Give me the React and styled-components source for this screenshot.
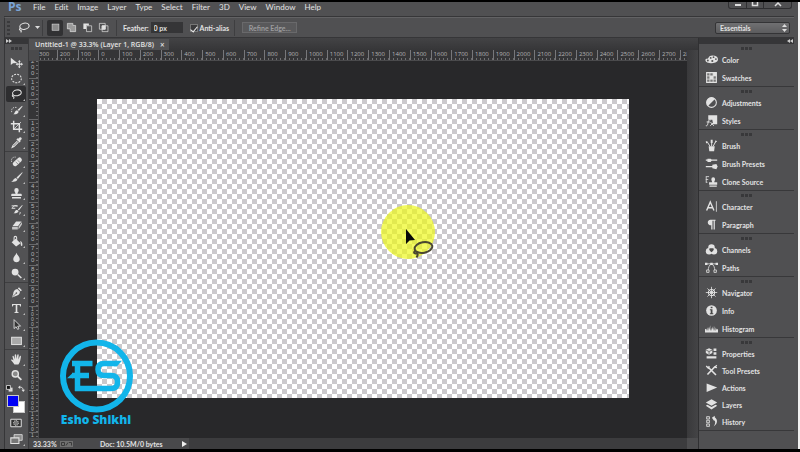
import React, { useState } from 'react';
import styled, { createGlobalStyle } from 'styled-components';

const MENUS = ['File', 'Edit', 'Image', 'Layer', 'Type', 'Select', 'Filter', '3D', 'View', 'Window', 'Help'];

const H_MARKS = Array.from({ length: 32 }, (_, i) => Math.abs(i * 100 - 300));
const V_MARKS = Array.from({ length: 19 }, (_, i) => Math.abs(i * 100 - 200));

const lassoShape = (
    <g fill="none" stroke="currentColor" strokeWidth="1.3">
        <ellipse cx="8.5" cy="6" rx="5.4" ry="3.5" transform="rotate(-12 8.5 6)" />
        <path d="M4 8.2c-1.6.6-1.5 2.2-.1 2.3 1.2 0 1.2 1.5.3 2.6" />
    </g>
);

const TOOL_GROUPS = [
    [
        { name: 'Move', noFlyout: true, art: <g fill="currentColor"><path d="M1 2v9l2.700-2.200L9 8.500z" /><path d="M11.500 5l1.800 2.200h-1.200v2h1.700V8l2.200 2-2.200 2v-1.200h-1.700v2h1.200L11.500 15l-1.800-2.200h1.200v-2H9.200V12L7 10l2.200-2v1.200h1.700v-2H9.700z" /></g> },
        { name: 'Elliptical marquee', art: <ellipse cx="8" cy="8" rx="6" ry="5.2" fill="none" stroke="currentColor" strokeWidth="1.3" strokeDasharray="2.4 1.4" /> },
        { name: 'Lasso', art: lassoShape },
        { name: 'Quick selection', art: <g><path d="M15 2L9.4 7l1.6 1.7L15.4 3z" fill="currentColor" /><path d="M8.8 7.6l1.9 2c-1 2.8-4.2 3.6-6.7 2.9 1.6-.7 1.4-1.6 2-2.7.6-1.2 1.7-1.9 2.8-2.2z" fill="currentColor" /><path d="M2 10V7.500C2.300 5 4.500 3.800 8 4.200" fill="none" stroke="currentColor" strokeDasharray="1.6 1.2" /></g> },
        { name: 'Crop', art: <g fill="none" stroke="currentColor" strokeWidth="1.8"><path d="M4.500 1v10.500H15M1 4.500h10.500V15" /><path d="M5 11l8.500-8.500" strokeWidth="1" /></g> },
        { name: 'Eyedropper', art: <g><path d="M10 3.500l1.800-1.800c1.600-1 3.400.8 2.400 2.400L12.400 6l.7.800-1.300 1.300L7.900 4.200l1.300-1.300z" fill="currentColor" /><path d="M9 6.200L3.600 11.600 2.600 14l2.300-1 5.500-5.400" fill="none" stroke="currentColor" strokeWidth="1.300" /></g> },
    ],
    [
        { name: 'Healing brush', art: <g><rect x="2.500" y="5.600" width="13" height="5.600" rx="2.600" transform="rotate(-42 9 8.400)" fill="currentColor" /><path d="M7 8.500l3 2.700M9.200 6.400l3 2.700" stroke="#6a6a6a" strokeWidth=".8" /><path d="M2 8.500C1 5 3 2.200 7 2.600" fill="none" stroke="currentColor" strokeDasharray="1.500 1.200" /></g> },
        { name: 'Brush', art: <g fill="currentColor"><path d="M15 1.500L8 8l1.700 1.800L15.500 2z" /><path d="M7.300 8.600l1.900 2c-1 2.600-4.600 3.300-7.700 2.400 1.900-.5 2.200-1.300 2.800-2.400.8-1.200 1.800-1.900 3-2z" /></g> },
        { name: 'Clone stamp', art: <path d="M6.800 8.200C6.600 6.800 5.300 5.800 5.300 4a2.700 2.700 0 015.400 0c0 1.800-1.300 2.800-1.500 4.200H13c1 0 1.500.6 1.500 1.600v1.400h-13V9.800c0-1 .5-1.600 1.500-1.600zM2.500 12.300h11v1.700h-11z" fill="currentColor" /> },
        { name: 'History brush', art: <g><path d="M15 2.500L9.700 8l1.200 1.200L15.500 3z" fill="currentColor" /><path d="M9 8.600l1.500 1.500c-.8 2-3.300 3-6.500 2.500 1.600-.5 1.500-1.400 2.100-2.500.6-.9 1.700-1.600 2.900-1.500z" fill="currentColor" /><path d="M2 3.500h7.500M2 6.500h4.500M3 6c1-2.800 4-3.500 6-2M12 11c1 .8 1 2-.5 2.800" fill="none" stroke="currentColor" strokeWidth="1.200" /></g> },
        { name: 'Eraser', art: <g><path d="M7.500 3h6.700l-4.400 6H3z" fill="currentColor" /><path d="M2.600 9.800h7v3.200h-7zM10.500 9.600l4.200-5.800v3l-4.200 6z" fill="currentColor" opacity=".8" /></g> },
        { name: 'Paint bucket', art: <g><path d="M7 4.500l6 5.500-5.500 4L2 8.800z" fill="currentColor" /><path d="M5 8V3.500c0-2.400 3.200-2.400 3.200 0V7" fill="none" stroke="currentColor" strokeWidth="1.300" /><path d="M12.500 7.500c2 .6 3 2.400 2.700 5.500-.9.900-1.900.3-1.900-.7 0-1.800-.2-3-.8-4.800z" fill="currentColor" /></g> },
        { name: 'Blur', art: <path d="M8 2c.6 2.800 4 5 4 8.200 0 5-8 5-8 0C4 7 7.400 4.800 8 2z" fill="currentColor" /> },
        { name: 'Dodge', art: <g><circle cx="6.300" cy="6.300" r="4.200" fill="currentColor" /><path d="M9.500 9.300l4.500 4.200" stroke="currentColor" strokeWidth="1.900" /></g> },
    ],
    [
        { name: 'Pen', art: <g><path d="M11 1.500l3.700 3.700-1.500 1.300L9.700 3z" fill="currentColor" /><path d="M9 3.800l3.300 3.400c-.3 3-2.300 4.800-5.900 5.300L2.500 14l1.300-4C4.200 6.500 6 4.300 9 3.800z" fill="currentColor" /><path d="M3 13.500l4.400-4.300" stroke="#535353" strokeWidth=".9" /><circle cx="7.900" cy="8.700" r="1" fill="#535353" /></g> },
        { name: 'Type', art: <path d="M2.500 2.500h11v3h-1c-.2-1.400-.8-1.700-2-1.700H9V11.500c0 .9.500 1.100 1.600 1.200v.8H5.400v-.8C6.500 12.600 7 12.400 7 11.500V3.800H5.500c-1.200 0-1.800.3-2 1.700h-1z" fill="currentColor" /> },
        { name: 'Path selection', art: <path d="M5 2v11l2.500-2.300L9.400 14l1.600-.8L9.500 10H13z" fill="#333" stroke="currentColor" strokeWidth="1.100" /> },
        { name: 'Rectangle', art: <rect x="2" y="4" width="12" height="9" fill="#a9a9a9" stroke="currentColor" strokeWidth="1.200" /> },
    ],
    [
        { name: 'Hand', art: <path d="M5.500 14C4.200 11.900 2.900 10.300 1.200 8.500c.7-1 1.900-.6 3.100.8L3 4.200c.2-1.100 1.400-1 1.700 0l1.200 3.500L5.800 2.500c.3-1.200 1.600-1.100 1.800 0l.5 4.800.9-5c.4-1 1.600-.9 1.700.2l-.4 5.400 1.700-3.900c.5-.9 1.700-.5 1.500.6-.6 3.200-.9 6.700-3.200 9.400z" fill="currentColor" /> },
        { name: 'Zoom', noFlyout: true, art: <g><circle cx="6.500" cy="6" r="3.800" fill="#8a8a8a" stroke="currentColor" strokeWidth="1.700" /><path d="M9.200 8.800l4.800 4.700" stroke="currentColor" strokeWidth="2.200" /></g> },
    ],
];

const PANEL_GROUPS = [
    [
        { name: 'Color', art: <g><path d="M9 3c4.500 0 7 2 7 4.800 0 3-3 4.700-7.500 4.700C4 12.500.5 11.300.5 8.600c0-1.500 1.300-1.800 2.600-1.600C4.500 7 4 3 9 3z" fill="currentColor" /><g fill="#535353"><circle cx="3.500" cy="9.300" r="1.200" /><circle cx="7" cy="6" r="1.100" /><circle cx="10.500" cy="5.200" r="1.100" /><circle cx="13.400" cy="7.500" r="1.100" /><circle cx="9" cy="9.800" r="1.300" /></g></g> },
        { name: 'Swatches', art: <g><path d="M2 2h12v12H2z" fill="#777" stroke="currentColor" strokeWidth="1.300" /><path d="M6 2v12M10 2v12M2 6h12M2 10h12" stroke="currentColor" /><path d="M10 2h4v4h-4zM6 6h4v4H6z" fill="currentColor" /></g> },
    ],
    [
        { name: 'Adjustments', art: <g><circle cx="8" cy="8" r="6" fill="none" stroke="currentColor" strokeWidth="1.300" /><path d="M12.300 3.700A6 6 0 003.700 12.300z" fill="currentColor" /></g> },
        { name: 'Styles', art: <g><path d="M4 1.500h11v11h-5L9 7H4z" fill="currentColor" /><path d="M7 7.300c-3-1-2.800 2.400-3.500 4.500-.4 2-.9 3-2.500 2.600M2 9.800h4M6.800 10l4 4.500M11 10l-4.500 4.500" fill="none" stroke="currentColor" strokeWidth="1.200" /></g> },
    ],
    [
        { name: 'Brush', art: <g><path d="M4.500 9h7.500l-.8 6H5.300z" fill="currentColor" /><path d="M6.300 9L3 4M8.200 9V2M10 9l3-5.500" stroke="currentColor" strokeWidth="1.200" /><path d="M1.300 5.500L1 2.500l3.300 1.300zM7 1h2.400v4H7zM12 4.500l1-3L15 3z" fill="currentColor" /></g> },
        { name: 'Brush Presets', art: <g><path d="M1 3.200h14v1.500H1zM1 11h14v1.500H1z" fill="currentColor" /><path d="M3 2h4l1.500 2L7 6H3zM9 9.500l5-1 1.500 3.200L14 15l-5-1.300z" fill="currentColor" /></g> },
        { name: 'Clone Source', art: <g><path d="M8.800 9c0-1.700-1-2-1-3.800a2.300 2.300 0 014.600 0c0 1.800-1 2.100-1 3.800H15v3H5V9zM5.500 12.800h9v1.700h-9z" fill="currentColor" /><path d="M1 2h4M1 5.500h3M1 9h2M1.500 2v7" stroke="currentColor" /></g> },
    ],
    [
        { name: 'Character', art: <g fill="none" stroke="currentColor"><path d="M2 13L6.500 2.500 11 13M3.500 9.500h6" strokeWidth="1.700" /><path d="M14 1.500v13" /></g> },
        { name: 'Paragraph', art: <path d="M6.700 2H13v1.300h-.9V14h-1.500V3.300H9.200V14H7.700V9C2.200 9 2.200 2 6.700 2z" fill="currentColor" /> },
    ],
    [
        { name: 'Channels', art: <g><circle cx="8" cy="5.500" r="4" fill="currentColor" /><circle cx="5" cy="10" r="4" fill="currentColor" /><circle cx="11" cy="10" r="4" fill="currentColor" /><path d="M5 7.200c2-.8 4-.8 6 0-.3 1.800-1.400 3.200-3 4.300-1.600-1.100-2.700-2.500-3-4.300z" fill="#4a4a4a" /></g> },
        { name: 'Paths', art: <g><path d="M1 3.500h14M4 12c0-4 1-7 4-8.500 3 1.500 4 4.500 4 8.500" fill="none" stroke="currentColor" /><path d="M0 2h3v3H0zM6.500 2h3v3h-3zM13 2h3v3h-3z" fill="currentColor" /><path d="M2 11h3v3H2zM11 11h3v3h-3z" fill="#535353" stroke="currentColor" /></g> },
    ],
    [
        { name: 'Navigator', art: <g fill="none" stroke="currentColor"><circle cx="8" cy="8" r="3.800" strokeWidth="1.300" /><path d="M8 1v14M1 8h14M3 3l10 10M13 3L3 13" /><circle cx="8" cy="8" r="1.300" fill="currentColor" /></g> },
        { name: 'Info', art: <g><circle cx="8" cy="8" r="6.600" fill="currentColor" /><path d="M7 3.300h2.200v2H7zM6 6.500h3.200v5h1v1.200H6v-1.200h1V7.700H6z" fill="#474747" /></g> },
        { name: 'Histogram', art: <path d="M0 13V9l1.500-.8V11L3 6.500V11l1.500-5V11L6.500 4v7L8 7v4l2-6v6l1.500-6v6L13 6.500V11l1.500-3 1.500 1.500V13z" fill="currentColor" /> },
    ],
    [
        { name: 'Properties', art: <g><path d="M5 1.500L9 3.300v4L5 9.500 1 7.300v-4z" fill="currentColor" /><path d="M1.500 4L5 5.500 8.500 4M5 5.500V9" fill="none" stroke="#555" /><path d="M10.500 1.800H14V5h-3.500zM10.500 6.500H14v3h-3.500zM2 11.500h12v2.600H2z" fill="currentColor" /></g> },
        { name: 'Tool Presets', art: <g fill="none" stroke="currentColor"><path d="M4 4l9.500 9.500M12.500 3L3 13" strokeWidth="2" /><path d="M1.500 2.500L4 5l1.300-2.400M14.500 1.500L12 4l2.700.6" strokeWidth="1.600" /></g> },
        { name: 'Actions', art: <path d="M2 3l13 5-13 5.500z" fill="currentColor" /> },
        { name: 'Layers', art: <g fill="currentColor"><path d="M8 1.500l7 4-7 4-7-4z" /><path d="M1 9.500l2-1.200 5 2.900 5-2.900 2 1.200-7 4.500z" /></g> },
        { name: 'History', art: <g><path d="M2 2h3.500v3H2zM2 6.500h3.500v3H2zM2 11h3.500v3H2z" fill="#666" stroke="currentColor" /><path d="M8.500 3.500L12 1v1.900c4 2.600 3.800 8-1.300 11.300C13 10.500 13 8 11.500 6v1.800z" fill="currentColor" /></g> },
    ],
];

const SELECT_MODES = [
    { name: 'New selection', art: <rect x="3" y="3" width="10" height="9" fill="#8b8b8b" stroke="currentColor" strokeWidth=".8" /> },
    { name: 'Add to selection', art: <path d="M2 2h8v3h4v9H6v-4H2z" fill="#9b9b9b" stroke="currentColor" /> },
    { name: 'Subtract from selection', art: <g><path d="M2 2h8v3H6v5H2z" fill="currentColor" /><path d="M6.500 5.500h7.500V14H6.500z" fill="none" stroke="currentColor" /></g> },
    { name: 'Intersect with selection', art: <g fill="none" stroke="currentColor"><path d="M2 2h8.500v8.500H2zM6 5.500h8.500V14H6z" /><path d="M6 5.500h4.500v5H6z" fill="currentColor" /></g> },
];

const Icon = ({ size = 12, children }) => (
    <svg width={size} height={size} viewBox="0 0 16 16" aria-hidden="true">{children}</svg>
);

const App = () => {
    const [tool, setTool] = useState('Lasso');
    const [mode, setMode] = useState('New selection');
    const [feather, setFeather] = useState('0 px');
    const [antiAlias, setAntiAlias] = useState(true);

    return (
        <Screen>
            <GlobalStyle />
            <Frame>
                <MenuBar>
                    <Brand>Ps</Brand>
                    {MENUS.map((menu) => <MenuButton key={menu}>{menu}</MenuButton>)}
                    <WindowControls>
                        <WindowButton aria-label="Minimize">
                            <svg width="8" height="6"><path d="M1 3h6" stroke="#ddd" strokeWidth="2" /></svg>
                        </WindowButton>
                        <WindowButton aria-label="Restore">
                            <svg width="8" height="6"><path d="M1.500 0v3.500h5V0" fill="none" stroke="#ddd" strokeWidth="1.500" /></svg>
                        </WindowButton>
                        <WindowButton $wide aria-label="Close">
                            <svg width="8" height="6"><path d="M1 4l3-3 3 3" fill="none" stroke="#ddd" strokeWidth="1.500" /></svg>
                        </WindowButton>
                    </WindowControls>
                </MenuBar>

                <OptionsBar>
                    <BarGrip />
                    <PresetButton aria-label="Lasso preset">
                        <Icon size={14}>{lassoShape}</Icon>
                        <svg width="5" height="3"><path d="M0 0h5L2.500 3z" fill="#ddd" /></svg>
                    </PresetButton>
                    <Divider />
                    <Modes>
                        {SELECT_MODES.map(({ name, art }) => (
                            <ModeButton key={name} aria-label={name} $active={mode === name} onClick={() => setMode(name)}>
                                <Icon size={11}>{art}</Icon>
                            </ModeButton>
                        ))}
                    </Modes>
                    <Divider />
                    <Field>
                        Feather:
                        <FeatherInput value={feather} onChange={(e) => setFeather(e.target.value)} />
                    </Field>
                    <CheckField>
                        <CheckBox type="checkbox" checked={antiAlias} onChange={(e) => setAntiAlias(e.target.checked)} />
                        Anti-alias
                    </CheckField>
                    <Divider />
                    <RefineButton>Refine Edge...</RefineButton>
                    <WorkspacePicker>
                        <WorkspaceSelect aria-label="Workspace">
                            <option>Essentials</option>
                        </WorkspaceSelect>
                        <PickerArrows width="5" height="8" viewBox="0 0 5 8">
                            <path d="M0 3L2.500 0 5 3zM0 5h5L2.500 8z" fill="#ddd" />
                        </PickerArrows>
                    </WorkspacePicker>
                </OptionsBar>

                <Workspace>
                    <Toolbar>
                        <ColumnHead>
                            <svg width="6" height="4"><path d="M0 0l3 2-3 2zM3 0l3 2-3 2z" fill="#ccc" /></svg>
                        </ColumnHead>
                        <Grip $tall />
                        {TOOL_GROUPS.map((group, i) => (
                            <ToolGroup key={i}>
                                {group.map(({ name, art, noFlyout }) => (
                                    <ToolButton key={name} aria-label={name} $active={tool === name} $flyout={!noFlyout} onClick={() => setTool(name)}>
                                        <Icon size={13}>{art}</Icon>
                                    </ToolButton>
                                ))}
                            </ToolGroup>
                        ))}
                        <ColorResets>
                            <ResetButton aria-label="Default colors">
                                <Icon size={7}><path d="M6 6h9v9H6z" fill="#ddd" /><path d="M1 1h9v9H1z" fill="#111" stroke="#ddd" strokeWidth="2" /></Icon>
                            </ResetButton>
                            <ResetButton aria-label="Swap colors">
                                <Icon size={7}><path d="M3 5c6-1 9 2 9 8" fill="none" stroke="#ddd" strokeWidth="2" /><path d="M0 5l5-4v8zM8 11h8l-4 5z" fill="#ddd" /></Icon>
                            </ResetButton>
                        </ColorResets>
                        <ColorPair>
                            <ColorChip $back $color="#ffffff" aria-label="Background color" />
                            <ColorChip $color="#0000f5" aria-label="Foreground color" />
                        </ColorPair>
                        <ToolButton aria-label="Quick mask">
                            <Icon size={12}><path d="M1 3h14v10H1z" fill="#333" stroke="currentColor" strokeWidth="1.300" /><circle cx="8" cy="8" r="3.300" fill="#777" stroke="currentColor" strokeDasharray="1.500 1" /></Icon>
                        </ToolButton>
                        <ToolButton aria-label="Screen mode" $flyout>
                            <Icon size={13}><path d="M5 2h10v7H5z" fill="#8a8a8a" stroke="currentColor" /><path d="M1 6h10v7H1z" fill="#777" stroke="currentColor" strokeWidth="1.300" /></Icon>
                        </ToolButton>
                    </Toolbar>

                    <Document>
                        <TabStrip>
                            <Tab>
                                Untitled-1 @ 33.3% (Layer 1, RGB/8)
                                <CloseTab aria-label="Close tab">×</CloseTab>
                            </Tab>
                        </TabStrip>
                        <RulerCorner />
                        <TopRuler>
                            {H_MARKS.map((mark, i) => <TopMark key={i}>{mark}</TopMark>)}
                        </TopRuler>
                        <SideRuler>
                            {V_MARKS.map((mark, i) => (
                                <SideMark key={i} $dense={mark >= 1000}>
                                    {String(mark).split('').map((digit, n) => <span key={n}>{digit}</span>)}
                                </SideMark>
                            ))}
                        </SideRuler>
                        <Pasteboard>
                            <Artboard>
                                <Pointer>
                                    <svg width="54" height="54" viewBox="0 0 54 54" overflow="visible" aria-hidden="true">
                                        <path d="M25 24v15l3.500-3.500L34 35z" fill="#080808" />
                                        <g fill="none" stroke="#4a4730" strokeWidth="2">
                                            <ellipse cx="42.500" cy="42.500" rx="9" ry="5.300" transform="rotate(-10 42.500 42.500)" />
                                            <path d="M34.500 45.500c-3 2.500-.5 3.500 1.500 2.500 1 1 .5 3-.5 4.500" />
                                        </g>
                                    </svg>
                                </Pointer>
                            </Artboard>
                        </Pasteboard>
                        <ScrollTrack />
                        <StatusRow>
                            <Status>
                                <ZoomLevel>33.33%</ZoomLevel>
                                <svg width="13" height="6"><path d="M0 0h13v6H0z" fill="#707070" /><path d="M1.500 1.500h3v3h-3zM6 4.500l2-3M9 1.500h2.500v3" fill="none" stroke="#3b3b3b" /></svg>
                                <DocSize>Doc: 10.5M/0 bytes</DocSize>
                                <svg width="5" height="6"><path d="M0 0l5 3-5 3z" fill="#eee" /></svg>
                            </Status>
                        </StatusRow>
                        <ScrollCorner />
                    </Document>

                    <Dock>
                        <ColumnHead $end>
                            <svg width="6" height="4"><path d="M3 0L0 2l3 2zM6 0L3 2l3 2z" fill="#ccc" /></svg>
                        </ColumnHead>
                        {PANEL_GROUPS.map((group, i) => (
                            <PanelGroup key={i} $tight={group.length > 3}>
                                <Grip />
                                {group.map(({ name, art }) => (
                                    <PanelButton key={name}>
                                        <Icon size={13}>{art}</Icon>
                                        {name}
                                    </PanelButton>
                                ))}
                            </PanelGroup>
                        ))}
                    </Dock>
                </Workspace>
            </Frame>

            <Watermark>
                <svg width="74" height="74" viewBox="0 0 74 74" aria-hidden="true">
                    <circle cx="37.500" cy="37" r="33.500" fill="none" stroke="#12b5ea" strokeWidth="6" />
                    <g fill="none" stroke="#12b5ea" strokeWidth="5.500">
                        <path d="M13 24.500h20.500M18.500 22v30M13 36.500h17" />
                        <path d="M16 49.500h36q6.500 0 6.500-6v-1q0-6-6.500-6h-7q-6 0-6-6t6-6h13" />
                    </g>
                    <path d="M8 39.200l6-5.400v5.400zM56 21.800h7l-5 5.400h-3z" fill="#12b5ea" />
                </svg>
                <WatermarkName>Esho Shikhi</WatermarkName>
            </Watermark>
        </Screen>
    );
};

const GlobalStyle = createGlobalStyle`
  * {
    box-sizing: border-box;
  }

  body {
    margin: 0;
    background: #000;
    font-family: Lato, 'Open Sans', sans-serif;
    font-size: 7px;
    line-height: 10px;
    color: #e2e2e2;
  }

  button, input, select {
    margin: 0;
    padding: 0;
    border: 0;
    background: none;
    color: inherit;
    font: inherit;
  }

  svg {
    display: block;
    flex: none;
  }
`;

const Screen = styled.div`
  position: relative;
  height: 100vh;
  display: flex;
  border: solid #000;
  border-width: 2px 0 3px;
`;

const Frame = styled.main`
  flex: 1;
  min-width: 0;
  display: flex;
  flex-direction: column;
  padding: 0 4px;
  border-right: 2px solid #f2f2f2;
  background: #505052;
`;

const MenuBar = styled.nav`
  height: 15px;
  flex: none;
  display: flex;
  align-items: flex-start;
  gap: 9px;
  padding-left: 4px;
  border-bottom: 1px solid #363638;
  font-size: 8px;
`;

const Brand = styled.span`
  width: 16px;
  font-family: 'Open Sans', sans-serif;
  font-size: 12px;
  font-weight: 700;
  color: #7aa5d8;
`;

const MenuButton = styled.button``;

const WindowControls = styled.div`
  display: flex;
  margin: 0 2px 0 auto;
  border: 1px solid #2f2f31;
  border-top: 0;
  border-radius: 0 0 3px 3px;
`;

const WindowButton = styled.button`
  width: ${({ $wide }) => ($wide ? 28 : 17)}px;
  height: 6px;
  display: flex;
  justify-content: center;

  & + & {
    border-left: 1px solid #2f2f31;
  }
`;

const OptionsBar = styled.div`
  height: 21px;
  flex: none;
  display: flex;
  align-items: center;
  padding: 0 4px 0 2px;
  border-top: 1px solid #626264;
  border-bottom: 1px solid #363638;
  border-left: 1px solid #363638;
  font-weight: 700;
`;

const BarGrip = styled.span`
  width: 3px;
  height: 14px;
  background: repeating-linear-gradient(#3a3a3c 0 2px, transparent 2px 4px);
`;

const PresetButton = styled.button`
  display: flex;
  align-items: center;
  gap: 4px;
  padding: 0 2px 0 7px;
`;

const Divider = styled.span`
  width: 1px;
  height: 16px;
  background: #3e3e40;
`;

const Modes = styled.div`
  display: flex;
  margin: 0 5px 0 4px;
`;

const ModeButton = styled.button`
  width: 16px;
  height: 16px;
  display: grid;
  place-items: center;
  border-radius: 2px;
  background: ${({ $active }) => ($active ? '#313133' : 'none')};
`;

const Field = styled.label`
  display: flex;
  align-items: center;
  gap: 2px;
  margin-left: 6px;
`;

const FeatherInput = styled.input`
  width: 32px;
  height: 11px;
  padding-left: 3px;
  background: #353537;
`;

const CheckField = styled.label`
  display: flex;
  align-items: center;
  gap: 2px;
  margin: 0 5px 0 7px;
`;

const CheckBox = styled.input`
  appearance: none;
  width: 8px;
  height: 8px;
  display: grid;
  place-items: center;
  background: #3a3a3c;
  border: 1px solid #777;

  &:checked::after {
    content: '';
    width: 3px;
    height: 6px;
    border: solid #eee;
    border-width: 0 1px 1px 0;
    transform: rotate(40deg);
  }
`;

const RefineButton = styled.button`
  width: 55px;
  height: 11px;
  margin-left: 7px;
  border: 1px solid #69696b;
  background: #59595b;
  color: #9c9c9e;
  line-height: 8px;
`;

const WorkspacePicker = styled.div`
  position: relative;
  margin-left: auto;
`;

const WorkspaceSelect = styled.select`
  appearance: none;
  width: 75px;
  height: 12px;
  padding-left: 4px;
  border: 1px solid #343436;
  border-radius: 2px;
  background: linear-gradient(#707072, #5c5c5e);
`;

const PickerArrows = styled.svg`
  position: absolute;
  right: 3px;
  top: 2px;
  pointer-events: none;
`;

const Workspace = styled.div`
  flex: 1;
  min-height: 0;
  display: grid;
  grid-template-columns: 24px 1fr 96px;
  border-left: 1px solid #363638;
  background: #3a3a3c;
`;

const Toolbar = styled.aside`
  display: flex;
  flex-direction: column;
  margin-right: 1px;
  background: #525254;
`;

const ColumnHead = styled.div`
  height: 6px;
  flex: none;
  display: flex;
  align-items: center;
  justify-content: ${({ $end }) => ($end ? 'flex-end' : 'flex-start')};
  padding: 0 1px;
  background: #363638;
`;

const Grip = styled.span`
  width: 12px;
  height: 3px;
  flex: none;
  align-self: center;
  margin: ${({ $tall }) => ($tall ? '3px 0 4px' : '3px 0 1px')};
  background: repeating-linear-gradient(90deg, #38383a 0 3px, transparent 3px 4px);
`;

const ToolGroup = styled.div`
  display: flex;
  flex-direction: column;

  & + & {
    margin: 1px 0 0;
    padding-top: 1px;
    border-top: 1px solid #3e3e40;
  }
`;

const ToolButton = styled.button`
  position: relative;
  width: 20px;
  height: 16px;
  flex: none;
  display: grid;
  place-items: center;
  margin-left: 1px;
  border-radius: 2px;
  background: ${({ $active }) => ($active ? '#2e2e30' : 'none')};

  &::after {
    content: '';
    display: ${({ $flyout }) => ($flyout ? 'block' : 'none')};
    position: absolute;
    right: 1px;
    bottom: 1px;
    border: 1px solid #bbb;
    border-top-color: transparent;
    border-left-color: transparent;
  }
`;

const ColorResets = styled.div`
  display: flex;
  justify-content: space-between;
  padding: 2px 3px 3px 1px;
`;

const ResetButton = styled.button``;

const ColorPair = styled.div`
  position: relative;
  height: 19px;
  margin-bottom: 1px;
`;

const ColorChip = styled.button`
  position: absolute;
  left: ${({ $back }) => ($back ? 8 : 2)}px;
  top: ${({ $back }) => ($back ? 6 : 0)}px;
  width: 12px;
  height: 12px;
  border: 1px solid #c9c9c9;
  background: ${({ $color }) => $color};
`;

const Document = styled.section`
  min-width: 0;
  min-height: 0;
  display: grid;
  grid-template-columns: 10px 1fr 11px;
  grid-template-rows: 12px 11px 1fr 11px;
`;

const TabStrip = styled.div`
  grid-column: 1 / -1;
  display: flex;
  padding-top: 1px;
  background: linear-gradient(#434345, #363638);
`;

const Tab = styled.div`
  display: flex;
  align-items: center;
  gap: 6px;
  padding: 0 4px 0 6px;
  background: #525254;
  font-family: 'Open Sans', sans-serif;
  font-weight: 600;
  white-space: nowrap;
`;

const CloseTab = styled.button`
  font-size: 8px;
  line-height: 8px;
`;

const RulerCorner = styled.span`
  background: #4a4a4c;
`;

const TopRuler = styled.div`
  grid-column: 2;
  display: flex;
  overflow: hidden;
  background: #353537;
  border-bottom: 1px solid #4a4a4c;
  color: #b4b4b6;
`;

/* one cell is 100 document pixels */
const TopMark = styled.span`
  flex: 0 0 calc(100% / 31.2);
  padding-left: 2px;
  border-left: 1px solid #77777a;
  background: repeating-linear-gradient(90deg, transparent 0 3px, #707072 3px 4px) bottom / 100% 2px no-repeat;
  font-family: 'Open Sans', sans-serif;
  font-size: 6px;
  line-height: 8px;

  &:first-child {
    margin-left: -3px;
  }
`;

const SideRuler = styled.div`
  grid-row: 3;
  grid-column: 1;
  display: flex;
  flex-direction: column;
  overflow: hidden;
  background: #353537;
  border-right: 1px solid #4a4a4c;
  color: #b4b4b6;
`;

const SideMark = styled.span`
  flex: 0 0 calc(100% / 18.15);
  display: flex;
  flex-direction: column;
  padding-left: 2px;
  border-top: 1px solid #68686a;
  background: repeating-linear-gradient(transparent 0 3px, #707072 3px 4px) right / 2px 100% no-repeat;
  font-family: 'Liberation Sans', sans-serif;
  font-size: ${({ $dense }) => ($dense ? 5 : 6)}px;
  line-height: ${({ $dense }) => ($dense ? 5 : 6)}px;

  &:first-child {
    margin-top: -4px;
  }
`;

const Pasteboard = styled.div`
  grid-row: 3;
  grid-column: 2;
  display: flex;
  padding: 38px 58px 40px;
  background: #28282a;
`;

const Artboard = styled.div`
  position: relative;
  flex: 1;
  background: repeating-conic-gradient(#cbc9cc 0 25%, #fff 0 50%) 0 0 / 10px 10px;
`;

const Pointer = styled.div`
  position: absolute;
  left: 284px;
  top: 106px;
  width: 54px;
  height: 54px;
  border-radius: 50%;
  background: rgba(238, 247, 20, 0.68);
`;

const ScrollTrack = styled.span`
  grid-row: 2 / 4;
  grid-column: 3;
  background: linear-gradient(90deg, #39393b, #444446);
`;

const StatusRow = styled.footer`
  grid-column: 1 / 3;
  display: flex;
  background: #3c3c3e;
`;

const Status = styled.div`
  width: 160px;
  display: flex;
  align-items: center;
  padding: 0 2px 0 4px;
  background: #49494b;
  font-weight: 700;
`;

const ZoomLevel = styled.span`
  width: 27px;
`;

const DocSize = styled.span`
  margin: 0 auto 0 27px;
`;

const ScrollCorner = styled.span`
  background: #4d4d4f;
`;

const Dock = styled.aside`
  display: flex;
  flex-direction: column;
  border-left: 1px solid #303032;
  background: #505052;
`;

const PanelGroup = styled.div`
  display: flex;
  flex-direction: column;
  gap: ${({ $tight }) => ($tight ? 0 : 1)}px;
  border-bottom: 1px solid #38383a;

  ${Grip} {
    margin-bottom: ${({ $tight }) => ($tight ? 1 : 0)}px;
  }
`;

const PanelButton = styled.button`
  height: 17px;
  display: flex;
  align-items: center;
  gap: 4px;
  padding-left: 6px;
  font-weight: 700;
`;

const Watermark = styled.div`
  position: absolute;
  left: 59px;
  bottom: 22px;
  display: flex;
  flex-direction: column;
  align-items: center;
`;

const WatermarkName = styled.strong`
  font-family: 'Open Sans', sans-serif;
  font-size: 12px;
  line-height: 14px;
  font-weight: 800;
  color: #12b5ea;
`;

export default App;
